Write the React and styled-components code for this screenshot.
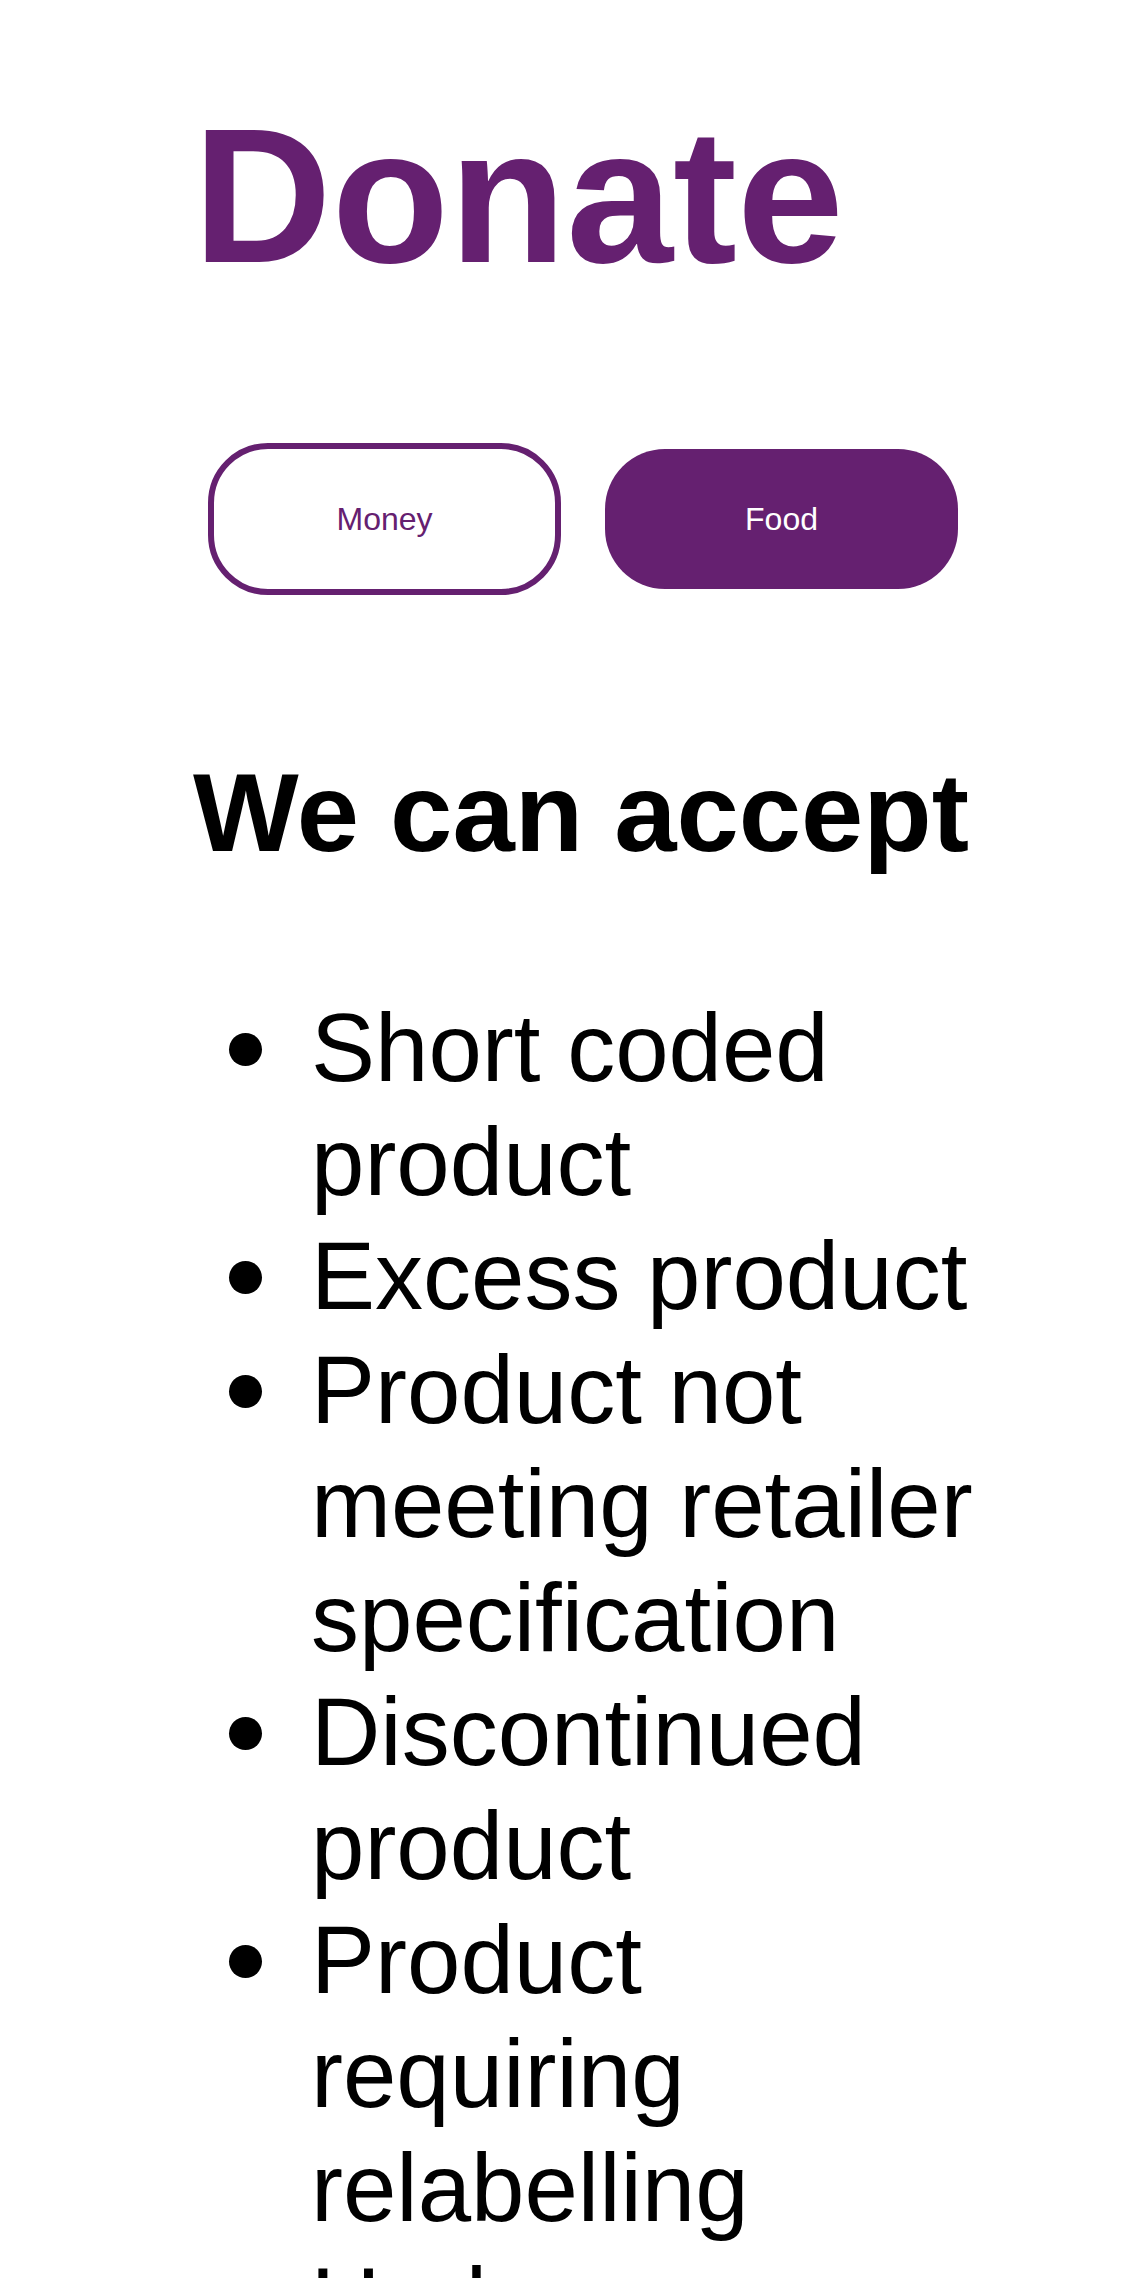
import React, { useState } from "react";
import styled, { createGlobalStyle } from "styled-components";

const purple = "#652070";

const items = [
  "Short coded product",
  "Excess product",
  "Product not meeting retailer specification",
  "Discontinued product",
  "Product requiring relabelling",
  "Under specification product",
];

const App = () => {
  const [tab, setTab] = useState("Food");

  return (
    <>
      <GlobalStyle />
      <Container>
        <Title>Donate</Title>
        <Tabs>
          <TabButton active={tab === "Money"} onClick={() => setTab("Money")} outlined>
            Money
          </TabButton>
          <TabButton active={tab === "Food"} onClick={() => setTab("Food")}>
            Food
          </TabButton>
        </Tabs>
        <Subtitle>We can accept</Subtitle>
        <List>
          {items.map((item, key) => (
            <Item key={key}>{item}</Item>
          ))}
        </List>
      </Container>
    </>
  );
};

export default App;

const GlobalStyle = createGlobalStyle`
body {
  margin: 0;
  background: #fff;
  font-family: "Liberation Sans", Arial, Helvetica, sans-serif;
}
`

const Container = styled.main`
box-sizing: border-box;
width: 1001px;
padding: 100px 0 0 193px;
`

const Title = styled.h1`
margin: 0;
font-size: 192px;
line-height: 1;
font-weight: 700;
color: ${purple};
`

const Tabs = styled.div`
display: flex;
align-items: center;
gap: 44px;
height: 152px;
margin-top: 151px;
padding-left: 15px;
`

const TabButton = styled.button`
box-sizing: border-box;
width: 353px;
height: ${props => (props.outlined ? "152px" : "140px")};
border: ${props => (props.outlined ? `6px solid ${purple}` : "none")};
border-radius: 60px;
background: ${props => (props.outlined ? "#fff" : purple)};
color: ${props => (props.outlined ? purple : "#fff")};
font-family: "Liberation Sans", Arial, sans-serif;
font-size: 32px;
cursor: pointer;
padding: 0;
`

const Subtitle = styled.h2`
margin: 162px 0 0;
font-size: 112px;
line-height: 1;
font-weight: 700;
color: #000;
`

const List = styled.ul`
margin: 122px 0 0;
padding-left: 118px;
list-style: none;
`

const Item = styled.li`
position: relative;
font-size: 96px;
line-height: 114px;
color: #000;

&::before {
  content: "";
  position: absolute;
  left: -82px;
  top: 42px;
  width: 33px;
  height: 33px;
  border-radius: 50%;
  background: #000;
}
`
